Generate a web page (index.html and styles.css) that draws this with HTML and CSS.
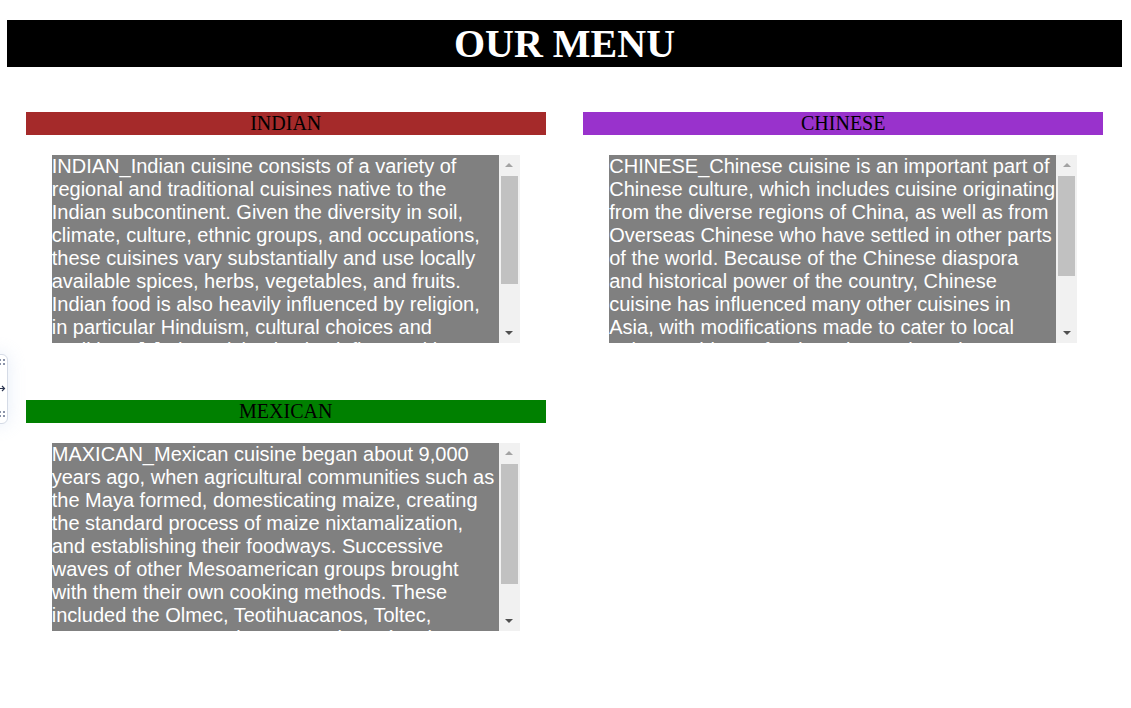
FILE: index.html
```html
<!DOCTYPE html>
<html lang="en">
<head>
<meta charset="utf-8">
<title>Our Menu</title>
<link rel="stylesheet" href="styles.css">
</head>
<body>
<h1 class="title">OUR MENU</h1>
<main class="menu">
  <section class="dish">
    <h2 class="dish-bar bar-indian">INDIAN</h2>
    <div class="dish-box">
      <div class="dish-text">INDIAN_Indian cuisine consists of a variety of regional and traditional cuisines native to the Indian subcontinent. Given the diversity in soil, climate, culture, ethnic groups, and occupations, these cuisines vary substantially and use locally available spices, herbs, vegetables, and fruits. Indian food is also heavily influenced by religion, in particular Hinduism, cultural choices and traditions.[1] The cuisine is also influenced by centuries of trade, and by the Mughal and colonial periods of the subcontinent's history.</div>
      <div class="scrollbar" aria-hidden="true">
        <div class="sb-btn sb-up"><svg width="8" height="4" viewBox="0 0 8 4"><polygon points="0,4 4,0 8,4" fill="#a3a3a3"/></svg></div>
        <div class="sb-track"><div class="sb-thumb" style="height:108px"></div></div>
        <div class="sb-btn sb-down"><svg width="8" height="4" viewBox="0 0 8 4"><polygon points="0,0 4,4 8,0" fill="#505050"/></svg></div>
      </div>
    </div>
  </section>
  <section class="dish">
    <h2 class="dish-bar bar-chinese">CHINESE</h2>
    <div class="dish-box">
      <div class="dish-text">CHINESE_Chinese cuisine is an important part of Chinese culture, which includes cuisine originating from the diverse regions of China, as well as from Overseas Chinese who have settled in other parts of the world. Because of the Chinese diaspora and historical power of the country, Chinese cuisine has influenced many other cuisines in Asia, with modifications made to cater to local palates. Chinese food staples such as rice, soy sauce, noodles, tea, chili oil, and tofu, and utensils such as chopsticks and the wok, can now be found worldwide.</div>
      <div class="scrollbar" aria-hidden="true">
        <div class="sb-btn sb-up"><svg width="8" height="4" viewBox="0 0 8 4"><polygon points="0,4 4,0 8,4" fill="#a3a3a3"/></svg></div>
        <div class="sb-track"><div class="sb-thumb" style="height:100px"></div></div>
        <div class="sb-btn sb-down"><svg width="8" height="4" viewBox="0 0 8 4"><polygon points="0,0 4,4 8,0" fill="#505050"/></svg></div>
      </div>
    </div>
  </section>
  <section class="dish">
    <h2 class="dish-bar bar-mexican">MEXICAN</h2>
    <div class="dish-box">
      <div class="dish-text">MAXICAN_Mexican cuisine began about 9,000 years ago, when agricultural communities such as the Maya formed, domesticating maize, creating the standard process of maize nixtamalization, and establishing their foodways. Successive waves of other Mesoamerican groups brought with them their own cooking methods. These included the Olmec, Teotihuacanos, Toltec, Huastec, Zapotec, Mixtec, Otomi, Purépecha, Totonac, Mazatec, and Mexica.</div>
      <div class="scrollbar" aria-hidden="true">
        <div class="sb-btn sb-up"><svg width="8" height="4" viewBox="0 0 8 4"><polygon points="0,4 4,0 8,4" fill="#a3a3a3"/></svg></div>
        <div class="sb-track"><div class="sb-thumb" style="height:120px"></div></div>
        <div class="sb-btn sb-down"><svg width="8" height="4" viewBox="0 0 8 4"><polygon points="0,0 4,4 8,0" fill="#505050"/></svg></div>
      </div>
    </div>
  </section>
</main>
<div class="side-widget" aria-hidden="true">
  <svg class="side-icons" width="7" height="68" viewBox="0 0 7 68">
    <rect x="0" y="4" width="2" height="2" fill="#8a93a8"/>
    <rect x="0" y="8" width="2" height="2" fill="#8a93a8"/>
    <rect x="4" y="4" width="2" height="2" fill="#8a93a8"/>
    <rect x="4" y="8" width="2" height="2" fill="#8a93a8"/>
    <path d="M0 33.5 H5.5 M3 31 L5.5 33.5 L3 36" stroke="#2c3550" stroke-width="1.2" fill="none"/>
    <rect x="0" y="56" width="2" height="2" fill="#8a93a8"/>
    <rect x="0" y="60" width="2" height="2" fill="#8a93a8"/>
    <rect x="4" y="56" width="2" height="2" fill="#8a93a8"/>
    <rect x="4" y="60" width="2" height="2" fill="#8a93a8"/>
  </svg>
</div>
</body>
</html>
```
FILE: styles.css
```css
html, body {
  margin: 0;
  padding: 0;
  background: #ffffff;
}

body {
  padding: 20px 9px 40px 7px;
  font-family: "Liberation Serif", "Times New Roman", serif;
  position: relative;
}

.title {
  margin: 0;
  height: 47px;
  background: #000000;
  color: #ffffff;
  font-family: "Liberation Serif", "Times New Roman", serif;
  font-size: 40px;
  font-weight: bold;
  line-height: 47px;
  text-align: center;
}

.menu {
  display: grid;
  grid-template-columns: 1fr 1fr;
  row-gap: 57px;
  padding-top: 45px;
}

.dish {
  display: flex;
  flex-direction: column;
  align-items: center;
}

.dish-bar {
  margin: 0;
  width: 520px;
  height: 23px;
  font-family: "Liberation Serif", "Times New Roman", serif;
  font-size: 20px;
  font-weight: normal;
  line-height: 23px;
  text-align: center;
  color: #000000;
}

.bar-indian { background: #a52a2a; }
.bar-chinese { background: #9932cc; }
.bar-mexican { background: #008000; }

.dish-box {
  display: flex;
  width: 468px;
  height: 188px;
  margin-top: 20px;
}

.dish-text {
  flex: 0 0 447px;
  width: 447px;
  overflow: hidden;
  background: #808080;
  color: #ffffff;
  font-family: "Liberation Sans", Arial, sans-serif;
  font-size: 20px;
  line-height: 23px;
}

.scrollbar {
  flex: 0 0 21px;
  display: flex;
  flex-direction: column;
  background: #f1f1f1;
}

.sb-btn {
  height: 20px;
  display: flex;
  align-items: center;
  justify-content: center;
}

.sb-btn svg {
  display: block;
}

.sb-track {
  flex: 1;
  padding: 1px 2px 0;
}

.sb-thumb {
  background: #c1c1c1;
}

.side-widget {
  position: absolute;
  left: -18px;
  top: 354px;
  width: 26px;
  height: 70px;
  box-sizing: border-box;
  border: 1px solid #d5dbe6;
  border-radius: 6px;
  background: #ffffff;
  box-shadow: 0 0 18px rgba(200, 215, 240, 0.45);
  display: flex;
  justify-content: flex-end;
  padding: 0 1px 0 0;
}

.side-icons {
  display: block;
}
```
